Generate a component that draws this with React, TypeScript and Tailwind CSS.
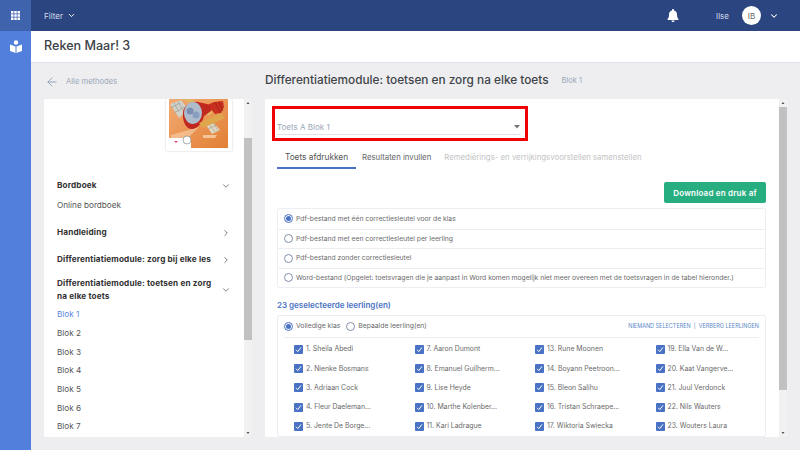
import React from 'react';
import { ChevronDown, ChevronRight, ArrowLeft } from 'lucide-react';

const font = { fontFamily: 'Inter, sans-serif' };

const options = [
    'Pdf-bestand met één correctiesleutel voor de klas',
    'Pdf-bestand met een correctiesleutel per leerling',
    'Pdf-bestand zonder correctiesleutel',
    'Word-bestand (Opgelet: toetsvragen die je aanpast in Word komen mogelijk niet meer overeen met de toetsvragen in de tabel hieronder.)',
];

const students = [
    ['1. Sheila Abedi', '2. Nienke Bosmans', '3. Adriaan Cock', '4. Fleur Daeleman...', '5. Jente De Borge...'],
    ['7. Aaron Dumont', '8. Emanuel Guilherm...', '9. Lise Heyde', '10. Marthe Kolenber...', '11. Kari Ladrague'],
    ['13. Rune Moonen', '14. Boyann Peetroon...', '15. Bleon Salihu', '16. Tristan Schraepe...', '17. Wiktoria Swiecka'],
    ['19. Ella Van de W...', '20. Kaat Vangerve...', '21. Juul Verdonck', '22. Nils Wauters', '23. Wouters Laura'],
];

const bloks = ['Blok 1', 'Blok 2', 'Blok 3', 'Blok 4', 'Blok 5', 'Blok 6', 'Blok 7'];

function Radio({ checked }: { checked?: boolean }) {
    return (
        <span className={`w-[9px] h-[9px] rounded-full border flex items-center justify-center shrink-0 bg-white ${checked ? 'border-[#4a72c4]' : 'border-[#7f8fa8]'}`}>
            {checked && <span className="w-[5px] h-[5px] rounded-full bg-[#4a72c4]" />}
        </span>
    );
}

function Check() {
    return (
        <span className="w-[9px] h-[9px] bg-[#4a72c4] rounded-[1px] flex items-center justify-center shrink-0">
            <svg width="7" height="7" viewBox="0 0 10 10" fill="none" stroke="white" strokeWidth="1.4"><path d="M1.500 5.500 4 8l4.500-6" /></svg>
        </span>
    );
}

function Scrollbar({ thumbTop, thumbHeight }: { thumbTop: number; thumbHeight: number }) {
    return (
        <div className="w-[8px] h-full flex flex-col items-center bg-[#f1f1f1]">
            <svg width="8" height="8" viewBox="0 0 8 8" className="shrink-0"><path d="M2.500 5h3L4 3z" fill="#505050" /></svg>
            <div className="flex-1 w-full flex flex-col">
                <div style={{ height: thumbTop }} />
                <div className="w-full bg-[#c1c1c1]" style={{ height: thumbHeight }} />
            </div>
            <svg width="8" height="8" viewBox="0 0 8 8" className="shrink-0"><path d="M2.500 3h3L4 5z" fill="#505050" /></svg>
        </div>
    );
}

function Cover() {
    return (
        <div className="w-[66px] h-[52px] bg-white shadow-[0_0_2px_rgba(0,0,0,0.2)] px-[3px]">
            <svg width="59" height="49" viewBox="0 0 59 49" className="block">
                <defs>
                    <linearGradient id="sky" x1="0" y1="0" x2="1" y2="1">
                        <stop offset="0" stopColor="#f2ab72" />
                        <stop offset="1" stopColor="#e27f35" />
                    </linearGradient>
                </defs>
                <rect width="59" height="49" fill="url(#sky)" />
                <path d="M2 36 30 28 20 38 2 42z" fill="#f8d2ae" opacity="0.6" />
                <path d="M34 36h14l-2 3H34z" fill="#f8d2ae" opacity="0.8" />
                {/* left wing */}
                <path d="M1 5 12 1l8 10-10 8z" fill="#cfd0c8" />
                <path d="M5 4l5 9M9 2.500l5 9M2 9l9-5M5 14l10-6" stroke="#8f8f86" strokeWidth="0.5" fill="none" />
                <path d="M13 0h9l22 13-4 4z" fill="#e3b465" />
                {/* tail */}
                <path d="M38 6l7-3 9-1 1 6-3 6-6 1z" fill="#c8301f" />
                <path d="M46 4l6 10M50 3l4 9" stroke="#8e1d14" strokeWidth="0.6" fill="none" />
                {/* body */}
                <path d="M14 14c0-7 8-12 15-11l9 2c3 1 5 4 4 7l-7 5c-2 8-8 14-13 13-5 0-9-9-8-16z" fill="#c0281f" />
                <ellipse cx="24" cy="14" rx="9" ry="11" fill="#aebccb" />
                <circle cx="21" cy="12" r="3.500" fill="#7b8fb4" />
                <circle cx="27" cy="16" r="3.500" fill="#8a9fc0" />
                {/* right wing */}
                <path d="M37 26l7-3 7 8-8 4z" fill="#ddd6c2" />
                <path d="M40 25l6 8M44 23.500l5 8M39 30l8-4" stroke="#9a927c" strokeWidth="0.5" fill="none" />
                <path d="M30 24 52 14l4 5-22 10z" fill="#dfa74c" />
                <rect x="0" y="39" width="22" height="10" fill="#ffffff" />
                <path d="M5 42h4l-2 2z" fill="#e0457b" />
                <circle cx="18" cy="41" r="4" fill="#fff" stroke="#777" strokeWidth="0.6" />
            </svg>
        </div>
    );
}

function SideHeading({ children, open }: { children: React.ReactNode; open?: boolean }) {
    return (
        <div className="flex items-center justify-between pr-[13px]">
            <div className="text-[8.200px] font-bold tracking-[0.15px] leading-[13px] text-[#333] w-[160px]">{children}</div>
            {open ? <ChevronDown size={10} strokeWidth={1.500} color="#333" /> : <ChevronRight size={10} strokeWidth={1.500} color="#333" />}
        </div>
    );
}

export default function App() {
    return (
        <div className="w-[800px] h-[450px] flex overflow-hidden bg-[#eeeef0]" style={font}>
            {/* Rail */}
            <div className="w-[31px] shrink-0 bg-[#527fdc] flex flex-col items-center">
                <div className="w-full h-[31px] bg-[#3f63ad] flex items-center justify-center">
                    <svg width="9" height="9" viewBox="0 0 9 9" fill="white">
                        <rect x="0" y="0" width="2.500" height="2.500" /><rect x="3.250" y="0" width="2.500" height="2.500" /><rect x="6.500" y="0" width="2.500" height="2.500" />
                        <rect x="0" y="3.250" width="2.500" height="2.500" /><rect x="3.250" y="3.250" width="2.500" height="2.500" /><rect x="6.500" y="3.250" width="2.500" height="2.500" />
                        <rect x="0" y="6.500" width="2.500" height="2.500" /><rect x="3.250" y="6.500" width="2.500" height="2.500" /><rect x="6.500" y="6.500" width="2.500" height="2.500" />
                    </svg>
                </div>
                <svg className="mt-[9px]" width="12" height="13" viewBox="0 0 12 13" fill="white">
                    <circle cx="6" cy="2.500" r="2.200" />
                    <path d="M0 4.500 5.500 6.500V13L0 11zM12 4.500 6.500 6.500V13l5.500-2z" />
                </svg>
            </div>

            <div className="flex-1 flex flex-col min-w-0">
                {/* Top bar */}
                <div className="h-[31px] shrink-0 bg-[#2a4580] flex items-center pl-[13px] pr-[21px] text-white">
                    <span className="text-[8px] text-[#d5dcea]">Filter</span>
                    <ChevronDown size={9} strokeWidth={2.500} className="ml-[4px]" />
                    <svg className="ml-auto" width="12" height="13" viewBox="0 0 12 13" fill="white">
                        <path d="M6 0c.6 0 1 .4 1 1v.6c2 .5 3 2 3 4 0 2.400.5 3.400 1.500 4.600V11H.5v-.8C1.500 9 2 8 2 5.600c0-2 1-3.500 3-4V1c0-.6.4-1 1-1z" />
                        <path d="M4.500 11.500h3c0 1-.7 1.500-1.500 1.500s-1.500-.5-1.500-1.500z" />
                    </svg>
                    <span className="ml-[37px] text-[8px] text-[#d5dcea]">Ilse</span>
                    <span className="ml-[13px] w-[19px] h-[19px] rounded-full bg-white text-[#666] text-[8px] flex items-center justify-center">IB</span>
                    <ChevronDown size={10} strokeWidth={2.500} className="ml-[8px]" />
                </div>

                {/* Page header */}
                <div className="h-[32px] shrink-0 bg-white border-b border-[#e0e0e8] flex items-center pl-[13px]">
                    <h1 className="text-[12.600px] font-medium text-[#3c4248]">Reken Maar! 3</h1>
                </div>

                {/* Body */}
                <div className="flex-1 flex min-h-0 pl-[13px] pb-[13px]">
                    <div className="w-[208px] shrink-0 flex flex-col">
                        <div className="h-[36px] shrink-0 flex items-center pl-[1px] pt-[1px]">
                            <ArrowLeft size={14} strokeWidth={1.500} color="#8b9db8" />
                            <span className="ml-[7px] text-[7.600px] text-[#98a5b8]">Alle methodes</span>
                        </div>
                        <div className="flex-1 flex min-h-0">
                            <div className="w-[200px] bg-white overflow-hidden pl-[13px]">
                                <div className="flex justify-end pr-[12px]"><Cover /></div>
                                <div className="mt-[28px]"><SideHeading open>Bordboek</SideHeading></div>
                                <div className="mt-[7px] text-[8.200px] leading-[13px] text-[#555]">Online bordboek</div>
                                <div className="mt-[14px]"><SideHeading>Handleiding</SideHeading></div>
                                <div className="mt-[14px]"><SideHeading>Differentiatiemodule: zorg bij elke les</SideHeading></div>
                                <div className="mt-[11px]"><SideHeading open>Differentiatiemodule: toetsen en zorg na elke toets</SideHeading></div>
                                <div className="mt-[2px] flex flex-col">
                                    {bloks.map((b, i) => (
                                        <div key={b} className={`h-[18.700px] flex items-center text-[8.200px] ${i === 0 ? 'text-[#5b86e0]' : 'text-[#555]'}`}>{b}</div>
                                    ))}
                                </div>
                            </div>
                            <Scrollbar thumbTop={31} thumbHeight={202} />
                        </div>
                    </div>

                    <div className="flex-1 flex flex-col min-w-0 pl-[13px]">
                        <div className="h-[36px] shrink-0 flex items-center">
                            <h2 className="text-[11.800px] font-medium text-[#3f4449]">Differentiatiemodule: toetsen en zorg na elke toets</h2>
                            <span className="ml-[13px] text-[7.500px] text-[#98a5b8]">Blok 1</span>
                        </div>
                        <div className="flex-1 flex min-h-0 pr-[13px]">
                            <div className="flex-1 bg-white overflow-hidden pl-[7px] pr-[13px] pt-[7px] min-w-0">
                                <div className="w-[256px] h-[35px] border-[3px] border-[#f00000] pl-[2px] pr-[4px] flex flex-col justify-end pb-[3px]">
                                    <div className="flex items-center justify-between border-b border-[#dfe2ea] h-[15px] pr-[1px]">
                                        <span className="text-[8px] text-[#9aa6b8]">Toets A Blok 1</span>
                                        <svg width="6" height="4" viewBox="0 0 6 4"><path d="M0 0h6L3 3.500z" fill="#777" /></svg>
                                    </div>
                                </div>

                                <div className="ml-[5px] mt-[8px] flex items-start h-[20px]">
                                    <div className="w-[79px] h-[20px] border-b-2 border-[#4a72c4] text-center text-[#555] leading-[16px] text-[8.300px]">Toets afdrukken</div>
                                    <div className="ml-[6px] text-[#666] leading-[16px] text-[7.800px]">Resultaten invullen</div>
                                    <div className="ml-[13px] text-[#c4c4c4] leading-[16px] text-[7.800px]">Remediërings- en verrijkingsvoorstellen samenstellen</div>
                                </div>

                                <div className="flex justify-end mt-[13px]">
                                    <button className="w-[102px] h-[21px] bg-[#27ae80] rounded-[2px] text-white text-[8px] font-semibold tracking-[0.2px]">Download en druk af</button>
                                </div>

                                <div className="ml-[5px] mt-[5px] border border-[#eceef2] rounded-[2px]">
                                    {options.map((o, i) => (
                                        <div key={o} className={`h-[19.500px] flex items-center pl-[6px] gap-[3px] text-[6.770px] text-[#6a6a6a] ${i > 0 ? 'border-t border-[#eceef2]' : ''}`}>
                                            <Radio checked={i === 0} />
                                            <span className="whitespace-nowrap">{o}</span>
                                        </div>
                                    ))}
                                </div>

                                <div className="ml-[5px] mt-[12px] text-[8px] font-semibold text-[#4a72c4] leading-[11px]">23 geselecteerde leerling(en)</div>

                                <div className="ml-[5px] mt-[4px] border border-[#eceef2] rounded-[2px] px-[6px]">
                                    <div className="h-[22px] flex items-center border-b border-[#eceef2] text-[6.800px] text-[#6a6a6a]">
                                        <Radio checked />
                                        <span className="ml-[3px]">Volledige klas</span>
                                        <span className="ml-[6px]"><Radio /></span>
                                        <span className="ml-[3px]">Bepaalde leerling(en)</span>
                                        <span className="ml-auto text-[5.500px] text-[#5a8ac8]">NIEMAND SELECTEREN &nbsp;|&nbsp; VERBERG LEERLINGEN</span>
                                    </div>
                                    <div className="grid grid-cols-[120.500px_120.500px_120.500px_100px] pl-[10px] pt-[2px]">
                                        {students.map((col, c) => (
                                            <div key={c} className="flex flex-col">
                                                {col.map((s) => (
                                                    <div key={s} className="h-[19.200px] flex items-center gap-[3px] text-[6.900px] text-[#6a6a6a] whitespace-nowrap">
                                                        <Check />
                                                        <span>{s}</span>
                                                    </div>
                                                ))}
                                            </div>
                                        ))}
                                    </div>
                                </div>
                            </div>
                            <Scrollbar thumbTop={0} thumbHeight={283} />
                        </div>
                    </div>
                </div>
            </div>
        </div>
    );
}
